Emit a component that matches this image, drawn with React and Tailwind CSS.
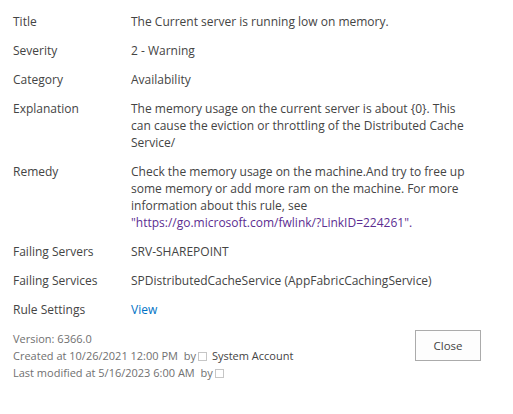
import React from 'react';

const rows = [
  { label: 'Title', value: 'The Current server is running low on memory.' },
  { label: 'Severity', value: '2 - Warning' },
  { label: 'Category', value: 'Availability' },
  {
    label: 'Explanation',
    value: (
      <>
        The memory usage on the current server is about {'{0}'}. This
        <br />
        can cause the eviction or throttling of the Distributed Cache
        <br />
        Service/
      </>
    ),
  },
  {
    label: 'Remedy',
    value: (
      <>
        Check the memory usage on the machine.And try to free up
        <br />
        some memory or add more ram on the machine. For more
        <br />
        information about this rule, see
        <br />
        <span className="text-[#5c2d91]">"https://go.microsoft.com/fwlink/?LinkID=224261".</span>
      </>
    ),
  },
  { label: 'Failing Servers', value: 'SRV-SHAREPOINT' },
  { label: 'Failing Services', value: 'SPDistributedCacheService (AppFabricCachingService)' },
  { label: 'Rule Settings', value: <span className="text-[#0072c6]">View</span> },
];

const Box = () => (
  <span className="inline-block w-[9px] h-[9px] border border-[#c6c6c6] bg-white align-[-1px] ml-[2px]" />
);

const App = () => {
  return (
    <div className="w-[513px] h-[414px] bg-white text-[#444] font-['Open_Sans',sans-serif] pt-[7px]">
      {rows.map((r) => (
        <div key={r.label} className="flex text-[12px] leading-[17px] py-[6px] pl-[13px]">
          <div className="w-[118px] shrink-0">{r.label}</div>
          <div className="whitespace-nowrap">{r.value}</div>
        </div>
      ))}
      <div className="flex justify-between items-start pl-[13px] pr-[32px] mt-[6px]">
        <div className="text-[11px] leading-[17px] text-[#707070]">
          <div>Version: 6366.0</div>
          <div>
            Created at 10/26/2021 12:00 PM&nbsp; by
            <Box />
            <span className="ml-[5px] text-[#444]">System Account</span>
          </div>
          <div>
            Last modified at 5/16/2023 6:00 AM&nbsp; by
            <Box />
          </div>
        </div>
        <button className="w-[66px] h-[31px] border border-[#ababab] bg-[#fdfdfd] text-[11.5px] text-[#444]">
          Close
        </button>
      </div>
    </div>
  );
};

export default App;
